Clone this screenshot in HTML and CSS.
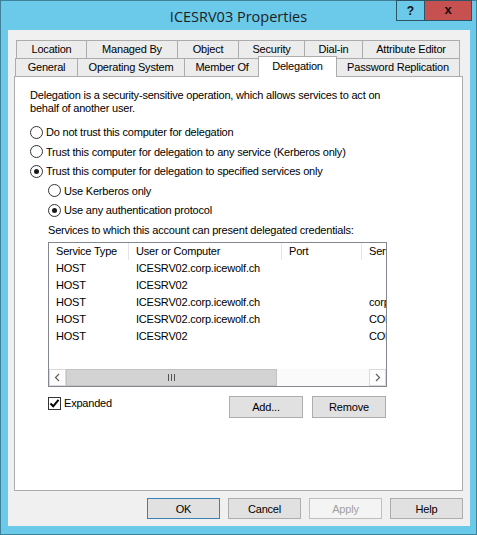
FILE: index.html
```html
<!DOCTYPE html>
<html>
<head>
<meta charset="utf-8">
<title>ICESRV03 Properties</title>
<link rel="stylesheet" href="styles.css">
</head>
<body>
<div class="window">
  <div class="titlebar">
    <div class="title">ICESRV03 Properties</div>
    <div class="controls">
      <div class="ctl help">?</div>
      <div class="ctl close">x</div>
    </div>
  </div>
  <div class="client">
    <div class="tabs">
      <div class="tabrow row1">
        <div class="tab">Location</div>
        <div class="tab">Managed By</div>
        <div class="tab">Object</div>
        <div class="tab">Security</div>
        <div class="tab">Dial-in</div>
        <div class="tab last">Attribute Editor</div>
      </div>
      <div class="tabrow row2">
        <div class="tab">General</div>
        <div class="tab">Operating System</div>
        <div class="tab">Member Of</div>
        <div class="tab selected">Delegation</div>
        <div class="tab last">Password Replication</div>
      </div>
    </div>
    <div class="panel">
      <p class="desc">Delegation is a security-sensitive operation, which allows services to act on<br>behalf of another user.</p>
      <div class="options">
        <div class="opt"><span class="radio"></span><span>Do not trust this computer for delegation</span></div>
        <div class="opt"><span class="radio"></span><span>Trust this computer for delegation to any service (Kerberos only)</span></div>
        <div class="opt"><span class="radio checked"></span><span>Trust this computer for delegation to specified services only</span></div>
        <div class="opt indent"><span class="radio"></span><span>Use Kerberos only</span></div>
        <div class="opt indent"><span class="radio checked"></span><span>Use any authentication protocol</span></div>
      </div>
      <div class="sub">
        <div class="label">Services to which this account can present delegated credentials:</div>
        <div class="list">
          <div class="lrow head">
            <div class="cell">Service Type</div>
            <div class="cell">User or Computer</div>
            <div class="cell">Port</div>
            <div class="cell">Service Name</div>
          </div>
          <div class="lrow">
            <div class="cell">HOST</div>
            <div class="cell">ICESRV02.corp.icewolf.ch</div>
            <div class="cell"></div>
            <div class="cell"></div>
          </div>
          <div class="lrow">
            <div class="cell">HOST</div>
            <div class="cell">ICESRV02</div>
            <div class="cell"></div>
            <div class="cell"></div>
          </div>
          <div class="lrow">
            <div class="cell">HOST</div>
            <div class="cell">ICESRV02.corp.icewolf.ch</div>
            <div class="cell"></div>
            <div class="cell">corp.icewolf.ch</div>
          </div>
          <div class="lrow">
            <div class="cell">HOST</div>
            <div class="cell">ICESRV02.corp.icewolf.ch</div>
            <div class="cell"></div>
            <div class="cell">CORP</div>
          </div>
          <div class="lrow">
            <div class="cell">HOST</div>
            <div class="cell">ICESRV02</div>
            <div class="cell"></div>
            <div class="cell">CORP</div>
          </div>
          <div class="spacer"></div>
          <div class="hscroll">
            <div class="sbtn"><svg width="7" height="9" viewBox="0 0 7 9"><polyline points="5,1 1.5,4.5 5,8" fill="none" stroke="#606060" stroke-width="1.2"/></svg></div>
            <div class="thumb"><svg width="9" height="7" viewBox="0 0 9 7"><path d="M1.5 0V7M4.5 0V7M7.5 0V7" stroke="#555" stroke-width="1"/></svg></div>
            <div class="track"></div>
            <div class="sbtn"><svg width="7" height="9" viewBox="0 0 7 9"><polyline points="2,1 5.5,4.5 2,8" fill="none" stroke="#606060" stroke-width="1.2"/></svg></div>
          </div>
        </div>
        <div class="actions">
          <div class="check-wrap">
            <span class="checkbox"><svg width="11" height="11" viewBox="0 0 11 11"><polyline points="1.5,5.5 4.2,8.3 9.5,1.8" fill="none" stroke="#000" stroke-width="2"/></svg></span>
            <span>Expanded</span>
          </div>
          <div class="btn-group">
            <div class="btn">Add...</div>
            <div class="btn">Remove</div>
          </div>
        </div>
      </div>
    </div>
    <div class="footer">
      <div class="btn small default">OK</div>
      <div class="btn small">Cancel</div>
      <div class="btn small disabled">Apply</div>
      <div class="btn small">Help</div>
    </div>
  </div>
</div>
</body>
</html>
```
FILE: styles.css
```css
* { box-sizing: border-box; }
html, body { margin: 0; padding: 0; }
body {
  width: 477px;
  height: 535px;
  overflow: hidden;
  font-family: "Liberation Sans", Arial, sans-serif;
  font-size: 11px;
  letter-spacing: -0.2px;
  color: #000;
  background: #6bc9e9;
}
.window {
  width: 477px;
  height: 535px;
  background: #6bc9e9;
  border: 1px solid #3f8199;
  display: flex;
  flex-direction: column;
}
.titlebar {
  height: 29px;
  flex: none;
  display: grid;
  grid-template-columns: 1fr auto 1fr;
  align-items: center;
}
.title {
  grid-column: 2;
  font-family: "Open Sans", "Noto Sans", sans-serif;
  font-size: 14.5px;
  letter-spacing: 0;
  color: #1e1e1e;
  padding-top: 1px;
}
.controls {
  grid-column: 3;
  justify-self: end;
  align-self: start;
  display: flex;
  margin-top: -1px;
  margin-right: 4px;
}
.ctl {
  height: 21px;
  border: 1px solid #2c5566;
  display: flex;
  align-items: center;
  justify-content: center;
  font-family: "Liberation Sans", Arial, sans-serif;
  font-weight: bold;
  font-size: 12px;
  letter-spacing: 0;
  color: #111;
}
.help { width: 28px; border-right: none; background: #6bc9e9; }
.close { width: 48px; background: #c75050; font-size: 13px; line-height: 1; padding-bottom: 2px; }

.client {
  margin: 0 6px 8px 7px;
  height: 496px;
  background: #f0f0f0;
  padding: 10px 7px 7px 6px;
  display: flex;
  flex-direction: column;
}
.tabs { flex: none; }
.tabrow { display: grid; height: 18px; }
.row1 { margin-left: 2px; grid-template-columns: 70px 91px 61px 66px 58px 98px; }
.row2 { margin-left: 1px; grid-template-columns: 62px 107px 75px 77px 124px; }
.tab {
  border-top: 1px solid #acacac;
  border-left: 1px solid #acacac;
  background: #ececec;
  display: flex;
  align-items: center;
  justify-content: center;
  white-space: nowrap;
  padding-bottom: 1px;
}
.tab.last { border-right: 1px solid #acacac; }
.tab.selected {
  position: relative;
  z-index: 2;
  background: #fff;
  margin: -2px -1px -1px -1px;
  border-right: 1px solid #acacac;
  padding-bottom: 3px;
}
.panel {
  flex: 1;
  background: #fff;
  border: 1px solid #acacac;
  padding: 12px 15px 0 15px;
}
.desc { margin: 0; line-height: 13px; }
.options { margin-top: 7.25px; }
.opt {
  height: 19.5px;
  display: flex;
  align-items: center;
  gap: 3px;
  white-space: nowrap;
}
.opt.indent { margin-left: 18px; }
.radio {
  width: 13px;
  height: 13px;
  border: 1px solid #333;
  border-radius: 50%;
  background: #fff;
  display: flex;
  align-items: center;
  justify-content: center;
  flex: none;
}
.radio.checked::after {
  content: "";
  width: 5px;
  height: 5px;
  border-radius: 50%;
  background: #1a1a1a;
}
.sub { margin-left: 18px; }
.label { margin-top: 4px; line-height: 13px; }
.list {
  margin-top: 5px;
  width: 339px;
  height: 145px;
  border: 1px solid #828790;
  background: #fff;
  display: flex;
  flex-direction: column;
  overflow: hidden;
}
.lrow {
  display: grid;
  grid-template-columns: 80px 153px 80px 120px;
  height: 17px;
  flex: none;
  white-space: nowrap;
}
.cell {
  padding-left: 7px;
  display: flex;
  align-items: center;
  overflow: hidden;
}
.head .cell { border-right: 1px solid #e5e5e5; }
.spacer { flex: 1; }
.hscroll {
  height: 17px;
  flex: none;
  display: flex;
  background: #f0f0f0;
}
.sbtn {
  width: 17px;
  flex: none;
  display: flex;
  align-items: center;
  justify-content: center;
  border: 1px solid #dadada;
  background: #fdfdfd;
}
.thumb {
  width: 211px;
  flex: none;
  background: #d3d3d3;
  border: 1px solid #c2c2c2;
  display: flex;
  align-items: center;
  justify-content: center;
}
.track { flex: 1; background: #fafafa; }
.actions {
  width: 338px;
  margin-top: 9px;
  display: flex;
  justify-content: space-between;
  align-items: flex-start;
}
.check-wrap {
  display: flex;
  align-items: center;
  gap: 3px;
  margin-top: 1px;
  line-height: 13px;
}
.checkbox {
  width: 13px;
  height: 13px;
  border: 1px solid #333;
  background: #fff;
  display: flex;
  align-items: center;
  justify-content: center;
}
.btn-group { display: flex; gap: 9px; }
.btn {
  width: 74px;
  height: 22px;
  border: 1px solid #adadad;
  background: #e1e1e1;
  display: flex;
  align-items: center;
  justify-content: center;
}
.footer {
  flex: none;
  margin-top: 7px;
  display: flex;
  justify-content: flex-end;
  gap: 8px;
}
.btn.small { width: 73px; height: 21px; }
.btn.default { border-color: #3c7fb1; }
.btn.disabled { border-color: #bfbfbf; background: #f4f4f4; color: #a0a0a0; }
```
